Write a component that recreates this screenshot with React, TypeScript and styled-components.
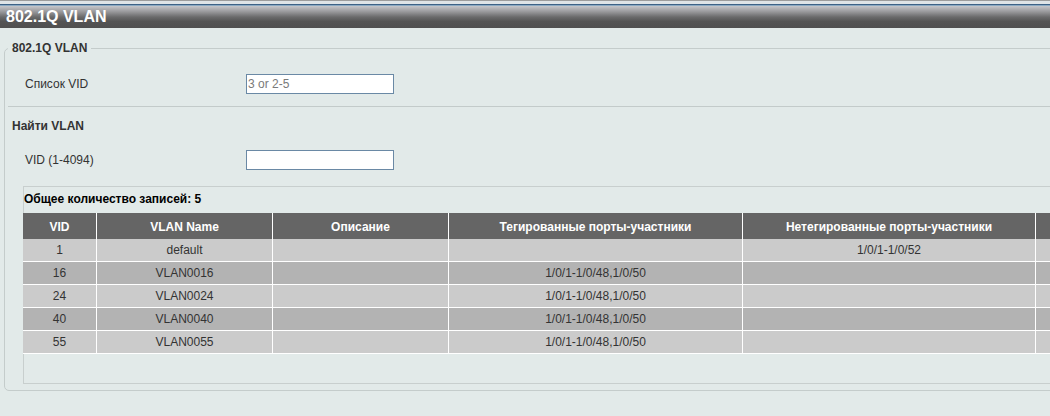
import React from "react";
import styled, { createGlobalStyle } from "styled-components";

const GlobalStyle = createGlobalStyle`
  html, body {
    margin: 0;
    padding: 0;
    overflow: hidden;
    background: #e2eae9;
  }
  body {
    font-family: "Liberation Sans", Arial, sans-serif;
    font-size: 12px;
    color: #333333;
  }
`;

const Page = styled.div`
  width: 1120px;
  min-height: 416px;
  background: #e2eae9;
`;

const TopStrip = styled.div`
  height: 6px;
  background: linear-gradient(
    to bottom,
    #9c9c9c 0px,
    #9c9c9c 1px,
    #dfe4e7 1px,
    #dfe4e7 4px,
    #3e6286 4px,
    #3e6286 5px,
    #8aa9c2 5px,
    #8aa9c2 6px
  );
`;

const TitleBar = styled.div`
  height: 22px;
  display: flex;
  align-items: center;
  padding-left: 6px;
  background: linear-gradient(
    to bottom,
    #c6c6ca 0%,
    #9a9a9d 25%,
    #6a6a6b 50%,
    #545454 70%,
    #4f4f4f 100%
  );
  color: #ffffff;
  font-size: 16px;
  font-weight: bold;
  line-height: 22px;
`;

const Panel = styled.fieldset`
  margin: 13px 0 0 4px;
  padding: 0 0 6px 3px;
  border: 1px solid #c4cccb;
  border-radius: 5px;
  min-width: 0;
`;

const PanelLegend = styled.legend`
  padding: 0 4px;
  margin-left: 0;
  font-size: 12px;
  font-weight: bold;
  line-height: 14px;
  color: #333333;
`;

const FormRow = styled.div<{ $top: number }>`
  display: grid;
  grid-template-columns: 221px 148px;
  align-items: center;
  height: 20px;
  margin-top: ${(p) => p.$top}px;
  padding-left: 17px;
`;

const Label = styled.span`
  font-size: 12px;
  color: #333333;
`;

const TextInput = styled.input`
  box-sizing: border-box;
  width: 148px;
  height: 20px;
  margin: 0;
  padding: 0 1px;
  border: 1px solid #6a89a5;
  background: #ffffff;
  font-family: "Liberation Sans", Arial, sans-serif;
  font-size: 12px;
  color: #333333;
  outline: none;
  &::placeholder {
    color: #7a7a7a;
  }
`;

const Divider = styled.hr`
  margin: 12px 0 0 0;
  border: none;
  border-top: 1px solid #c3cbca;
  height: 0;
`;

const SectionTitle = styled.div`
  margin-top: 12px;
  padding-left: 4px;
  font-size: 12px;
  font-weight: bold;
  line-height: 14px;
  color: #333333;
`;

const ResultBox = styled.div`
  margin: 16px 0 0 15px;
  border: 1px solid #c8cfce;
  border-right: none;
  padding-bottom: 29px;
`;

const ResultCount = styled.div`
  padding: 5px 0 7px 0;
  font-size: 12px;
  font-weight: bold;
  line-height: 14px;
  color: #000000;
`;

const Table = styled.table`
  border-collapse: collapse;
  table-layout: fixed;
  width: 1208px;
  margin-left: -1px;
`;

const HeadCell = styled.th<{ $w: number }>`
  width: ${(p) => p.$w}px;
  height: 25px;
  padding: 1px 0 0 0;
  background: #656565;
  color: #ffffff;
  font-size: 12px;
  font-weight: bold;
  text-align: center;
  border-left: 1px solid #ffffff;
  &:first-child {
    border-left: none;
  }
`;

const BodyRow = styled.tr<{ $alt: boolean }>`
  background: ${(p) => (p.$alt ? "#b3b3b3" : "#cbcbcb")};
`;

const Cell = styled.td`
  height: 22px;
  padding: 0;
  text-align: center;
  font-size: 12px;
  color: #333333;
  border-left: 1px solid #ffffff;
  border-bottom: 1px solid #ffffff;
  &:first-child {
    border-left: none;
  }
`;

const columns = [
  { title: "VID", w: 73 },
  { title: "VLAN Name", w: 175 },
  { title: "Описание", w: 175 },
  { title: "Тегированные порты-участники", w: 293 },
  { title: "Нетегированные порты-участники", w: 292 },
  { title: "", w: 200 },
];

const vlans = [
  { vid: "1", name: "default", desc: "", tagged: "", untagged: "1/0/1-1/0/52" },
  { vid: "16", name: "VLAN0016", desc: "", tagged: "1/0/1-1/0/48,1/0/50", untagged: "" },
  { vid: "24", name: "VLAN0024", desc: "", tagged: "1/0/1-1/0/48,1/0/50", untagged: "" },
  { vid: "40", name: "VLAN0040", desc: "", tagged: "1/0/1-1/0/48,1/0/50", untagged: "" },
  { vid: "55", name: "VLAN0055", desc: "", tagged: "1/0/1-1/0/48,1/0/50", untagged: "" },
];

export default function App() {
  return (
    <Page>
      <GlobalStyle />
      <TopStrip />
      <TitleBar>802.1Q VLAN</TitleBar>
      <Panel>
        <PanelLegend>802.1Q VLAN</PanelLegend>
        <FormRow $top={19}>
          <Label>Список VID</Label>
          <TextInput placeholder="3 or 2-5" />
        </FormRow>
        <Divider />
        <SectionTitle>Найти VLAN</SectionTitle>
        <FormRow $top={17}>
          <Label>VID (1-4094)</Label>
          <TextInput />
        </FormRow>
        <ResultBox>
          <ResultCount>Общее количество записей: 5</ResultCount>
          <Table>
            <thead>
              <tr>
                {columns.map((c, i) => (
                  <HeadCell key={i} $w={c.w}>
                    {c.title}
                  </HeadCell>
                ))}
              </tr>
            </thead>
            <tbody>
              {vlans.map((v, i) => (
                <BodyRow key={v.vid} $alt={i % 2 === 1}>
                  <Cell>{v.vid}</Cell>
                  <Cell>{v.name}</Cell>
                  <Cell>{v.desc}</Cell>
                  <Cell>{v.tagged}</Cell>
                  <Cell>{v.untagged}</Cell>
                  <Cell />
                </BodyRow>
              ))}
            </tbody>
          </Table>
        </ResultBox>
      </Panel>
    </Page>
  );
}
